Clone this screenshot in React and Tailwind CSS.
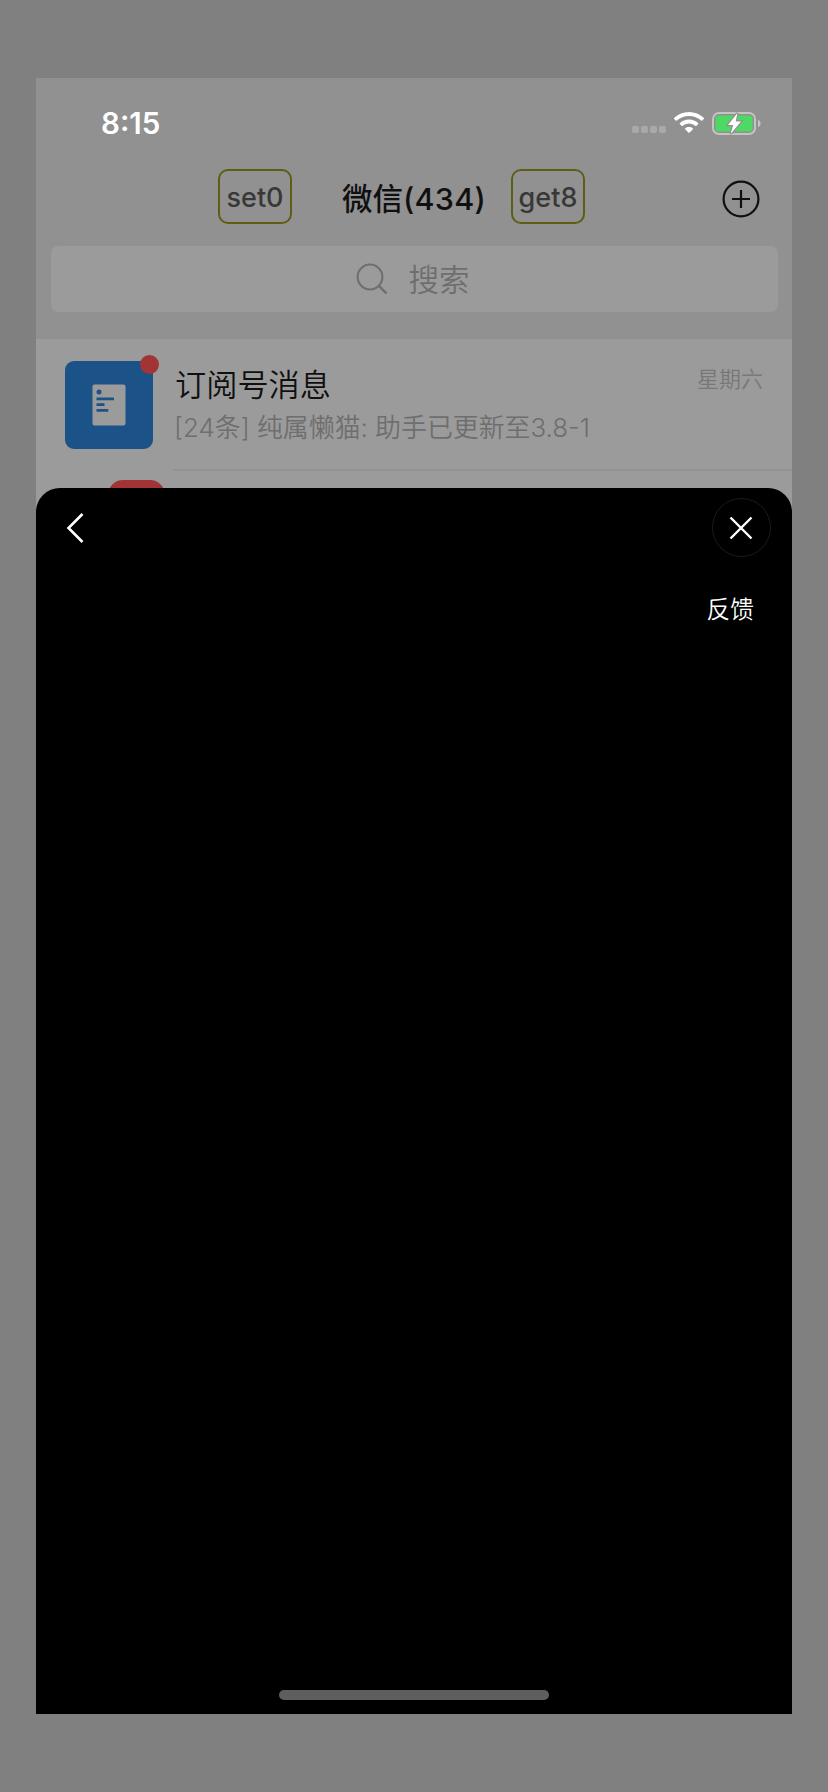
function StatusBar() {
  return (
    <div className="flex h-[79px] items-center pt-[11px] pr-[31px] pl-[65px]">
      <time className="text-[29.500px] leading-[36px] font-semibold text-white">8:15</time>
      <div className="ml-auto flex items-center">
        <div className="mt-[13px] mr-2 flex gap-[2px]">
          <i className="size-[7px] rounded-[2px] bg-[#a9a9a9]" />
          <i className="size-[7px] rounded-[2px] bg-[#a9a9a9]" />
          <i className="size-[7px] rounded-[2px] bg-[#a9a9a9]" />
          <i className="size-[7px] rounded-[2px] bg-[#a9a9a9]" />
        </div>
        <svg className="h-[22px] w-[30px]" viewBox="0 0 30 22" fill="#fff">
          <path d="M15 0C9.300 0 4 2.200 0 6.100c-.2.200-.2.500 0 .7l1.900 1.900c.2.200.5.200.7 0C6 5.600 10.300 3.900 15 3.900s9 1.700 12.400 4.800c.2.200.5.200.7 0L30 6.800c.2-.2.200-.5 0-.7C26 2.200 20.700 0 15 0Z" />
          <path d="M15 7.600c-3.500 0-6.800 1.300-9.200 3.600-.3.200-.3.500 0 .8l2 2c.2.200.5.200.7 0 1.800-1.600 4.100-2.500 6.500-2.500s4.700.9 6.500 2.500c.2.200.5.200.7 0l2-2c.3-.3.300-.6 0-.8-2.400-2.300-5.700-3.600-9.200-3.600Z" />
          <path d="M15 15c-1.500 0-2.900.5-3.900 1.400-.3.200-.3.500 0 .8l3.500 3.600c.2.200.6.200.8 0l3.500-3.600c.3-.3.300-.6 0-.8-1-.9-2.400-1.400-3.900-1.400Z" />
        </svg>
        <svg className="ml-[8px] h-[23px] w-[49px]" viewBox="0 0 49 23">
          <rect x="1" y="1" width="42" height="21" rx="6" fill="none" stroke="#c4c4c4" strokeWidth="2" />
          <path d="M46 7.800c1.700.7 2.600 2 2.600 3.700s-.9 3-2.600 3.700Z" fill="#c4c4c4" />
          <rect x="3.500" y="3.500" width="37" height="16" rx="3.500" fill="#4cd964" />
          <path d="m25.500 1-9.500 12h5.200L18.600 22l10.400-12.500h-5.300L25.500 1Z" fill="#fff" stroke="#919191" strokeWidth="2.400" paintOrder="stroke" />
        </svg>
      </div>
    </div>
  );
}

function NavBar() {
  return (
    <div className="flex h-[89px] pt-[12px]">
      <button className="ml-[182px] h-[55px] w-[74px] rounded-[10px] border-2 border-[#5d5e14] pt-px text-[27px] leading-none font-medium text-[#383838]">
        set0
      </button>
      <h1 className="ml-[50px] w-[144px] text-[30.500px] leading-[60px] font-medium whitespace-nowrap text-[#101010]">
        微信<span className="tracking-[0.3px]">(434)</span>
      </h1>
      <button className="ml-[25px] h-[55px] w-[74px] rounded-[10px] border-2 border-[#5d5e14] pt-px text-[27px] leading-none font-medium text-[#383838]">
        get8
      </button>
      <svg className="mt-[10.500px] ml-[137px] size-[38px]" viewBox="0 0 38 38" fill="none" stroke="#101010" strokeWidth="2.200">
        <circle cx="19" cy="19" r="17.400" />
        <path d="M19 10v18M10 19h18" />
      </svg>
    </div>
  );
}

function SearchField() {
  return (
    <div className="mr-[14px] ml-[15px] flex h-[66px] items-center rounded-[7px] bg-[#9b9b9b] pl-[304.500px] text-[30.500px] font-[350] text-[#6e6e6e]">
      <svg className="h-8 w-8" viewBox="0 0 32 32" fill="none" stroke="#6e6e6e" strokeWidth="2">
        <circle cx="14" cy="14" r="12.400" />
        <path d="m22.500 22.500 8 8" strokeWidth="2.400" />
      </svg>
      <span className="mt-px ml-[21px] leading-[44px]">搜索</span>
    </div>
  );
}

function ChatRow() {
  return (
    <div className="flex h-[132px] pl-[29px]">
      <div className="relative mt-[22px] flex size-[88px] items-center justify-center rounded-[9px] bg-[#1b5288]">
        <svg className="h-[42px] w-[34px]" viewBox="0 0 34 42">
          <rect x=".5" y=".5" width="33" height="41" rx="2" fill="#9b9b9b" />
          <g fill="#1b5288">
            <circle cx="7" cy="8" r="2.500" />
            <path d="M4.500 13.500H22v2.800H4.500zM4.500 19.300h8v2.800h-8zM4.500 25h11.800v2.800H4.500z" />
          </g>
        </svg>
        <span className="absolute -top-[6px] -right-[6px] size-[19px] rounded-full bg-[#a33436]" />
      </div>
      <div className="ml-[20px] flex-1 border-b-2 border-[#929292]">
        <div className="flex justify-between pr-[29px]">
          <span className="mt-[24px] ml-[2px] text-[31.200px] leading-[44px] font-[350] text-[#101010]">订阅号消息</span>
          <span className="mt-[24px] text-[22px] leading-[32px] font-[350] text-[#787878]">星期六</span>
        </div>
        <p className="-mt-px ml-px text-[25.900px] leading-[44px] font-[350] whitespace-nowrap text-[#6e6e6e]">
          [24条] 纯属懒猫: 助手已更新至3.8-1
        </p>
      </div>
    </div>
  );
}

function Sheet() {
  return (
    <section className="absolute inset-x-0 top-[410px] bottom-0 flex flex-col rounded-t-[24px] bg-black text-white">
      <div className="flex items-center justify-between pt-[10px] pr-[21.500px] pl-[29px]">
        <svg className="h-[34px] w-[24px]" viewBox="0 0 24 34" fill="none" stroke="#fff" strokeWidth="2.600">
          <path d="M17.500 3 3.500 17l14 14" />
        </svg>
        <button className="flex size-[59px] items-center justify-center rounded-full border border-[#1c1c1c]">
          <svg className="size-6" viewBox="0 0 24 24" stroke="#fff" strokeWidth="2.400">
            <path d="m1.500 1.500 21 21m0-21-21 21" />
          </svg>
        </button>
      </div>
      <span className="mt-[35px] mr-[38px] self-end text-[23.700px] leading-[36px] font-[350]">反馈</span>
      <div className="mt-auto mb-[14px] h-[10px] w-[270px] self-center rounded-full bg-[#5e5e5e]" />
    </section>
  );
}

export default function App() {
  return (
    <main className="h-[1792px] w-[828px] bg-[#808080] px-[36px] py-[78px] font-['Inter','Noto_Sans_CJK_SC',sans-serif]">
      <div className="relative h-[1636px] overflow-hidden bg-[#9b9b9b]">
        <header className="h-[261px] bg-[#919191]">
          <StatusBar />
          <NavBar />
          <SearchField />
        </header>
        <ChatRow />
        <div className="pt-[9px] pl-[72px]">
          <div className="h-[30px] w-[57px] rounded-full bg-[#a33436]" />
        </div>
        <Sheet />
      </div>
    </main>
  );
}
